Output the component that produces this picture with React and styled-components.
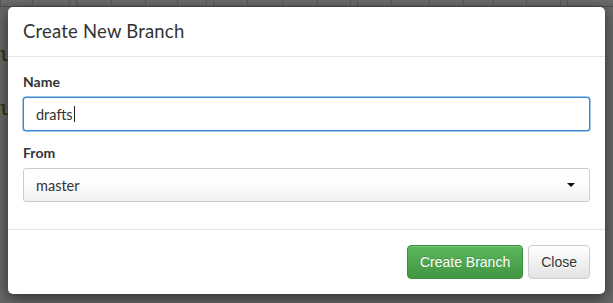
import React from "react";
import styled, { createGlobalStyle } from "styled-components";

const Global = createGlobalStyle`
  html, body { margin: 0; padding: 0; }
  body {
    width: 613px;
    height: 303px;
    overflow: hidden;
    background: #666666;
    font-family: "Lato", "Open Sans", sans-serif;
  }
`;

const Page = styled.div`
  position: relative;
  width: 613px;
  height: 303px;
  background: #676767;
  overflow: hidden;
`;

const Toolbar = styled.div`
  display: flex;
  height: 6px;
  border-bottom: 1px solid #4e4e4e;
  background: #6a6a6a;
`;

const ToolGroup = styled.div`
  display: flex;
  margin-right: 6px;
  border-right: 1px solid #575757;
`;

const ToolButton = styled.div`
  width: ${(p) => p.$w}px;
  border-left: 1px solid #575757;
  background: linear-gradient(#6c6c6c, #646464);
`;

const CodeLines = styled.div`
  display: flex;
  flex-direction: column;
  padding: 40px 0 0 0;
  gap: 36px;
  font-family: "DejaVu Sans Mono", monospace;
  font-size: 14px;
  line-height: 18px;
  font-weight: 700;
  color: #33330a;
`;

const Overlay = styled.div`
  position: absolute;
  inset: 0;
  padding: 7px 8px 0 8px;
`;

const Modal = styled.div`
  width: 597px;
  background: #fff;
  border-radius: 5px;
  box-shadow: 0 4px 14px rgba(0, 0, 0, 0.55);
  color: #333;
`;

const Header = styled.div`
  padding: 15px;
  border-bottom: 1px solid #e5e5e5;
`;

const Title = styled.h4`
  margin: 0;
  font-family: "Lato", "Open Sans", sans-serif;
  font-weight: 400;
  font-size: 18.5px;
  line-height: 19px;
  letter-spacing: 0.2px;
  color: #333;
`;

const Body = styled.div`
  padding: 15px;
`;

const FormGroup = styled.div`
  margin-bottom: 12px;
`;

const Label = styled.label`
  display: block;
  margin-bottom: 5px;
  font-weight: 700;
  font-size: 14px;
  line-height: 20px;
  color: #333;
`;

const Field = styled.div`
  position: relative;
  display: flex;
  align-items: center;
  box-sizing: border-box;
  height: 34px;
  padding: 0 12px;
  border-radius: 3px;
  font-size: 14.5px;
  color: #333;
  border: 1px solid ${(p) => (p.$focus ? "#3d8ad2" : "#cccccc")};
  background: ${(p) =>
    p.$focus ? "#fff" : "linear-gradient(#ffffff 0%, #fefefe 40%, #f1f1f1 100%)"};
  box-shadow: ${(p) =>
    p.$focus ? "0 0 0 0.5px #3d8ad2" : "inset 0 1px 0 #fff"};
`;

const Caret = styled.span`
  display: inline-block;
  width: 1px;
  height: 16px;
  margin-left: 1px;
  background: #222;
`;

const Arrow = styled.span`
  position: absolute;
  right: 14px;
  top: 14px;
  width: 0;
  height: 0;
  border-left: 4px solid transparent;
  border-right: 4px solid transparent;
  border-top: 4px solid #111;
`;

const Footer = styled.div`
  display: flex;
  justify-content: flex-end;
  gap: 5px;
  padding: 15px;
  border-top: 1px solid #e5e5e5;
`;

const Button = styled.button`
  box-sizing: border-box;
  height: 34px;
  padding: 0 12px;
  border-radius: 4px;
  font-family: "Liberation Sans", Arial, sans-serif;
  font-size: 14px;
  cursor: pointer;
  color: ${(p) => (p.$primary ? "#fff" : "#333")};
  border: 1px solid ${(p) => (p.$primary ? "#3e8f3e" : "#cccccc")};
  background: ${(p) =>
    p.$primary
      ? "linear-gradient(#5cb85c, #419641)"
      : "linear-gradient(#ffffff, #e3e3e3)"};
  box-shadow: inset 0 1px 0 rgba(255, 255, 255, 0.15);
  text-shadow: ${(p) => (p.$primary ? "0 -1px 0 rgba(0,0,0,0.15)" : "0 1px 0 #fff")};
`;

const groups = [
  [31, 36],
  [34, 33, 31, 28],
  [33, 34, 34, 32],
  [33, 37, 33, 29, 32, 33],
  [67],
];

export default function App() {
  return (
    <Page>
      <Global />
      <Toolbar>
        {groups.map((g, i) => (
          <ToolGroup key={i}>
            {g.map((w, j) => (
              <ToolButton key={j} $w={w} />
            ))}
          </ToolGroup>
        ))}
      </Toolbar>
      <CodeLines>
        <span>l</span>
        <span>l</span>
      </CodeLines>
      <Overlay>
        <Modal>
          <Header>
            <Title>Create New Branch</Title>
          </Header>
          <Body>
            <FormGroup>
              <Label>Name</Label>
              <Field $focus>
                drafts
                <Caret />
              </Field>
            </FormGroup>
            <FormGroup>
              <Label>From</Label>
              <Field>
                master
                <Arrow />
              </Field>
            </FormGroup>
          </Body>
          <Footer>
            <Button $primary>Create Branch</Button>
            <Button>Close</Button>
          </Footer>
        </Modal>
      </Overlay>
    </Page>
  );
}
